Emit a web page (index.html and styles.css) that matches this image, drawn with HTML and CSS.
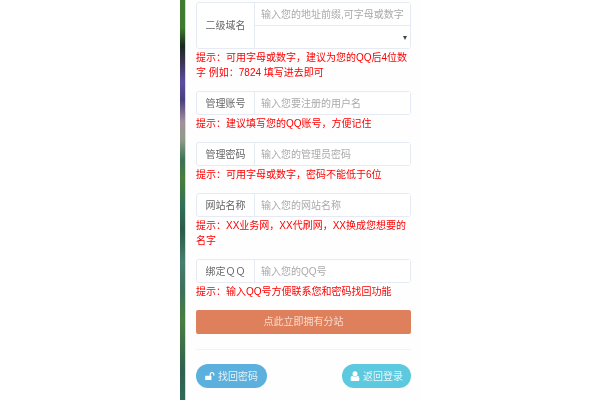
FILE: index.html
```html
<!DOCTYPE html>
<html lang="zh-CN">
<head>
	<meta charset="UTF-8">
	<title>搭建分站</title>
	<link rel="stylesheet" href="styles.css">
</head>
<body>
	<div class="page">
		<div class="strip"></div>
		<div class="panel">
			<div class="group">
				<span class="label">二级域名</span>
				<div class="fields">
					<input class="field" placeholder="输入您的地址前缀,可字母或数字">
					<div class="select-wrap"><select class="field"></select></div>
				</div>
			</div>
			<p class="hint">提示：可用字母或数字，建议为您的QQ后4位数字 例如：7824 填写进去即可</p>

			<div class="group">
				<span class="label">管理账号</span>
				<div class="fields"><input class="field" placeholder="输入您要注册的用户名"></div>
			</div>
			<p class="hint">提示：建议填写您的QQ账号，方便记住</p>

			<div class="group">
				<span class="label">管理密码</span>
				<div class="fields"><input class="field" placeholder="输入您的管理员密码"></div>
			</div>
			<p class="hint">提示：可用字母或数字，密码不能低于6位</p>

			<div class="group">
				<span class="label">网站名称</span>
				<div class="fields"><input class="field" placeholder="输入您的网站名称"></div>
			</div>
			<p class="hint">提示：XX业务网，XX代刷网，XX换成您想要的名字</p>

			<div class="group">
				<span class="label">绑定ＱＱ</span>
				<div class="fields"><input class="field" placeholder="输入您的QQ号"></div>
			</div>
			<p class="hint">提示：输入QQ号方便联系您和密码找回功能</p>

			<button class="submit">点此立即拥有分站</button>
			<hr class="rule">

			<div class="links">
				<a class="pill blue">
					<svg class="icon" viewBox="0 0 14 12"><path d="M1 5.500h7.200c.5 0 .8.3.8.8v4.400c0 .5-.3.8-.8.8H1c-.5 0-.8-.3-.8-.8V6.300c0-.5.3-.8.8-.8zM6.500 5.500V3.600C6.500 1.700 7.900.4 9.800.4s3.400 1.300 3.400 3.200v1.600h-1.700V3.600c0-.9-.7-1.500-1.700-1.500s-1.700.6-1.700 1.500v1.900z"/></svg>
					<span>找回密码</span>
				</a>
				<a class="pill cyan">
					<svg class="icon" viewBox="0 0 11 12"><circle cx="5.500" cy="3.200" r="3"/><path d="M2.200 5.600c1.800 1.400 4.800 1.400 6.600 0 1.400.5 2 2.200 2 4.500 0 1.200-.8 1.900-1.900 1.900H2.100C1 12 .2 11.300.2 10.100c0-2.300.6-4 2-4.500z"/></svg>
					<span>返回登录</span>
				</a>
			</div>
		</div>
	</div>
</body>
</html>
```

FILE: styles.css
```css
html, body {
	margin: 0;
	height: 100%;
	overflow: hidden;
	background: #fff;
}
body {
	font-family: "Liberation Sans", "Noto Sans CJK SC", sans-serif;
	font-size: 10px;
}

.page {
	display: flex;
	width: 241px;
	height: 400px;
	margin-left: 180px;
	filter: blur(0.4px);
}
.strip {
	box-sizing: border-box;
	width: 6px;
	flex: none;
	border-right: 1px solid #cfe0d0;
	background: linear-gradient(to bottom,
		#3f7c31 0, #3e7a30 28px, #16291f 46px, #3b3550 62px, #5b4da3 82px, #4a3f7c 100px,
		#a48f9c 122px, #8d9a88 140px, #3c7254 160px, #4a7f3a 178px, #33705a 205px,
		#2b5a48 230px, #467f6e 262px, #3c6f5c 290px, #4a7f42 320px, #2f6050 370px, #2f6a55 400px);
}
.panel {
	flex: 1;
	padding: 2px 10px 0;
	background: #fefefe;
}

.group {
	display: flex;
	border: 1px solid #e6ebf3;
	border-radius: 3px;
	background: #fff;
}
.label {
	display: flex;
	align-items: center;
	justify-content: center;
	width: 57px;
	flex: none;
	padding-bottom: 2px;
	color: #666;
	border-right: 1px solid #e6ebf3;
}
.fields {
	flex: 1;
	min-width: 0;
}
.field {
	display: block;
	box-sizing: border-box;
	width: 100%;
	height: 22px;
	padding: 0 6px;
	border: 0;
	outline: 0;
	background: #fff;
	font: inherit;
	color: #555;
}
.field::placeholder {
	color: #aaa;
}
.select-wrap {
	position: relative;
	border-top: 1px solid #e6ebf3;
}
.select-wrap select {
	appearance: none;
}
.select-wrap::after {
	content: "";
	position: absolute;
	right: 3px;
	top: 10px;
	border-left: 2.5px solid transparent;
	border-right: 2.5px solid transparent;
	border-top: 4px solid #444;
}

.hint {
	margin: 0 0 11px;
	padding-top: 1px;
	line-height: 15px;
	font-size: 10px;
	color: #f00;
}

.submit {
	display: block;
	width: 100%;
	height: 24px;
	padding: 0 0 3px;
	border: 0;
	border-radius: 2px;
	background: #df805c;
	color: #f6dacd;
	font: inherit;
}
.rule {
	height: 1px;
	margin: 15px 0 14px;
	border: 0;
	background: #f3f3f3;
}

.links {
	display: flex;
	justify-content: space-between;
}
.pill {
	display: flex;
	align-items: center;
	justify-content: center;
	gap: 3px;
	height: 24px;
	border-radius: 12px;
	color: #e6f4fa;
}
.pill span {
	padding-bottom: 1px;
}
.pill.blue {
	width: 71px;
	background: #5bb0dd;
}
.pill.cyan {
	width: 69px;
	background: #5dc9de;
}
.icon {
	width: 10px;
	height: 10px;
	fill: #fff;
}
```
